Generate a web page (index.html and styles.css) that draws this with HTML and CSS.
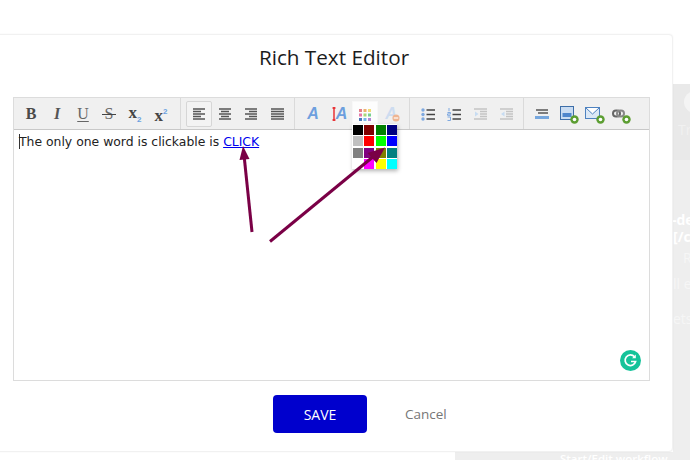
FILE: index.html
```html
<!DOCTYPE html>
<html lang="en">
<head>
<meta charset="utf-8">
<title>Rich Text Editor</title>
<link rel="stylesheet" href="styles.css">
</head>
<body>
<div class="backdrop">
  <div class="bd-side">
    <div class="bd-head"><span class="bd-dot"></span><span class="bd-line bd-m">Tri</span></div>
    <span class="bd-line bd-a">-de</span>
    <span class="bd-line bd-b">[/co</span>
    <span class="bd-line bd-c">R</span>
    <span class="bd-line bd-d">ll e</span>
    <span class="bd-line bd-e">ets</span>
  </div>
  <div class="bd-bottom"><span class="bd-flow">Start/Edit workflow</span></div>
</div>

<main class="modal">
  <h1 class="title">Rich Text Editor</h1>
  <section class="editor">
    <div class="toolbar">
      <div class="group g-first">
        <span class="btn"><span class="t t-b">B</span></span>
        <span class="btn"><span class="t t-i">I</span></span>
        <span class="btn"><span class="t t-u">U</span></span>
        <span class="btn"><span class="t t-s">S</span></span>
        <span class="btn"><span class="t t-x t-lo">x<sub>2</sub></span></span>
        <span class="btn"><span class="t t-x t-hi">x<sup>2</sup></span></span>
      </div>
      <div class="group">
        <span class="btn active"><svg width="12" height="12" viewBox="0 0 12 12"><path class="l" d="M0 1h12M0 3.500h8M0 6h12M0 8.500h8M0 11h12"/></svg></span>
        <span class="btn"><svg width="12" height="12" viewBox="0 0 12 12"><path class="l" d="M0 1h12M2 3.500h8M0 6h12M2 8.500h8M0 11h12"/></svg></span>
        <span class="btn"><svg width="12" height="12" viewBox="0 0 12 12"><path class="l" d="M0 1h12M4 3.500h8M0 6h12M4 8.500h8M0 11h12"/></svg></span>
        <span class="btn"><svg width="13" height="12" viewBox="0 0 13 12"><path class="l" d="M0 1h13M0 3.500h13M0 6h13M0 8.500h13M0 11h13"/></svg></span>
      </div>
      <div class="group g-wide">
        <span class="btn"><span class="t t-a">A</span></span>
        <span class="btn btn-rel"><svg class="ibar" width="4" height="14" viewBox="0 0 4 14"><path d="M2 0v14M.5 1h3M.5 13h3" stroke="#e8262a" stroke-width="1.400" fill="none"/></svg><span class="t t-a t-shift">A</span></span>
        <span class="btn open">
          <svg width="12" height="12" viewBox="0 0 12 12">
            <rect x="0" y="0" width="3" height="3" fill="#e4808a"/><rect x="4.500" y="0" width="3" height="3" fill="#eeb070"/><rect x="9" y="0" width="3" height="3" fill="#f0dc78"/>
            <rect x="0" y="4.500" width="3" height="3" fill="#e878a8"/><rect x="4.500" y="4.500" width="3" height="3" fill="#a8d878"/><rect x="9" y="4.500" width="3" height="3" fill="#78d090"/>
            <rect x="0" y="9" width="3" height="3" fill="#4a78b8"/><rect x="4.500" y="9" width="3" height="3" fill="#78b8e8"/><rect x="9" y="9" width="3" height="3" fill="#b088d8"/>
          </svg>
          <span class="palette">
            <i class="c c1"></i><i class="c c2"></i><i class="c c3"></i><i class="c c4"></i>
            <i class="c c5"></i><i class="c c6"></i><i class="c c7"></i><i class="c c8"></i>
            <i class="c c9"></i><i class="c c10"></i><i class="c c11"></i><i class="c c12"></i>
            <i class="c c13"></i><i class="c c14"></i><i class="c c15"></i><i class="c c16"></i>
          </span>
        </span>
        <span class="btn btn-rel"><span class="t t-a faded">A</span><svg class="minus" width="8" height="8" viewBox="0 0 9 9"><circle cx="4.500" cy="4.500" r="4" fill="#eeb592"/><path d="M2 4.500h5" stroke="#fff" stroke-width="1.300"/></svg></span>
      </div>
      <div class="group g-wide g-lists">
        <span class="btn"><svg width="14" height="13" viewBox="0 0 14 13"><circle cx="2" cy="2" r="1.700" fill="#7fa9e0"/><circle cx="2" cy="6.500" r="1.700" fill="#7fa9e0"/><circle cx="2" cy="11" r="1.700" fill="#7fa9e0"/><path class="k" d="M5.500 2H14M5.500 6.500H14M5.500 11H14"/></svg></span>
        <span class="btn"><svg width="14" height="13" viewBox="0 0 14 13"><path d="M2 0v3.200M.5 4.500h3v1.400h-3v1.400h3M.5 9h3v3.500h-3" stroke="#7fa9e0" stroke-width="1" fill="none"/><path class="k" d="M5.500 2H14M5.500 6.500H14M5.500 11H14"/></svg></span>
        <span class="btn"><svg width="13" height="12" viewBox="0 0 13 12"><path class="g" d="M0 1h13M6 3.500h7M6 6h7M6 8.500h7M0 11h13"/><path d="M4.500 6L1 3.500v5z" fill="#c7dcf2"/></svg></span>
        <span class="btn"><svg width="13" height="12" viewBox="0 0 13 12"><path class="g" d="M0 1h13M6 3.500h7M6 6h7M6 8.500h7M0 11h13"/><path d="M1 6L4.500 3.500v5z" fill="#c7dcf2"/></svg></span>
      </div>
      <div class="group g-last">
        <span class="btn"><svg width="14" height="10" viewBox="0 0 14 10"><path d="M1 1h12M3 4h10" stroke="#555" stroke-width="1.600"/><rect x="0" y="7" width="14" height="3" fill="#76a7de"/></svg></span>
        <span class="btn btn-rel"><svg class="up" width="14" height="14" viewBox="0 0 14 14"><rect x=".5" y=".5" width="13" height="13" fill="#c9dcf2" stroke="#3d6ea8"/><rect x="2.500" y="7" width="9" height="4" fill="#4e86cc"/></svg><svg class="plus" width="9" height="9" viewBox="0 0 9 9"><circle cx="4.500" cy="4.500" r="4.200" fill="#5c9e32"/><circle cx="4.500" cy="4.500" r="1.800" fill="#fff"/></svg></span>
        <span class="btn btn-rel"><svg class="up" width="15" height="12" viewBox="0 0 15 12"><rect x=".5" y=".5" width="14" height="11" fill="#dbe8f6" stroke="#4e82c0"/><path d="M1 1l6.500 6L14 1" stroke="#4e82c0" fill="#fff"/></svg><svg class="plus" width="9" height="9" viewBox="0 0 9 9"><circle cx="4.500" cy="4.500" r="4.200" fill="#5c9e32"/><circle cx="4.500" cy="4.500" r="1.800" fill="#fff"/></svg></span>
        <span class="btn btn-rel"><svg class="up" width="13" height="9" viewBox="0 0 13 9"><rect x="1" y="1.500" width="7" height="6" rx="3" fill="none" stroke="#666" stroke-width="2"/><rect x="5" y="1.500" width="7" height="6" rx="3" fill="none" stroke="#888" stroke-width="2"/></svg><svg class="plus" width="9" height="9" viewBox="0 0 9 9"><circle cx="4.500" cy="4.500" r="4.200" fill="#5c9e32"/><circle cx="4.500" cy="4.500" r="1.800" fill="#fff"/></svg></span>
      </div>
    </div>
    <div class="content">
      <p class="text"><span class="caret"></span>The only one word is clickable is <a class="link" href="#">CLICK</a></p>
      <svg class="grammarly" width="21" height="21" viewBox="0 0 21 21"><circle cx="10.500" cy="10.500" r="10.500" fill="#15c39a"/><path d="M14.500 6.800A5.300 5.300 0 1 0 15.600 11.500H11" fill="none" stroke="#fff" stroke-width="1.700"/><path d="M15.800 4.600v3.700h-3.700z" fill="#fff"/></svg>
    </div>
  </section>
  <div class="actions">
    <button class="save" type="button">SAVE</button>
    <span class="cancel">Cancel</span>
  </div>
</main>

<svg class="arrows" width="690" height="460" viewBox="0 0 690 460">
  <path d="M252 232L244 155" class="arrow"/>
  <path d="M243 146L239.500 160L249.500 159z" class="head"/>
  <path d="M270 241.500L374 156" class="arrow"/>
  <path d="M385 147.500L367.500 153L376.500 163z" class="head"/>
</svg>
</body>
</html>
```
FILE: styles.css
```css
* { box-sizing: border-box; }
html, body { margin: 0; padding: 0; }
body {
  position: relative;
  width: 690px;
  height: 460px;
  overflow: hidden;
  background: #fff;
  font-family: "Open Sans", sans-serif;
}

/* dimmed page behind the dialog */
.backdrop { position: absolute; inset: 0; }
.bd-side {
  position: absolute;
  left: 673px;
  top: 84px;
  width: 17px;
  height: 376px;
  background: #eeeeee;
  color: #fff;
  font-size: 14px;
  overflow: hidden;
}
.bd-head { position: relative; height: 76px; background: #e9e9e9; }
.bd-dot {
  position: absolute;
  left: 11px;
  top: 7px;
  width: 22px;
  height: 22px;
  border-radius: 50%;
  background: #f4f4f4;
}
.bd-line { position: absolute; white-space: nowrap; line-height: 16px; }
.bd-m { left: 5px; top: 38px; color: #f1f1f1; }
.bd-a { left: -1px; top: 128px; font-weight: 700; }
.bd-b { left: 0; top: 145px; font-weight: 700; }
.bd-c { left: 10px; top: 166px; color: #f6f6f6; }
.bd-d { left: 0; top: 192px; color: #f6f6f6; }
.bd-e { left: 0; top: 227px; color: #f6f6f6; }
.bd-bottom {
  position: absolute;
  left: 455px;
  top: 452px;
  width: 235px;
  height: 8px;
  background: #eeeeee;
  overflow: hidden;
}
.bd-flow {
  position: absolute;
  left: 105px;
  top: 0;
  color: #fff;
  font-size: 11.500px;
  font-weight: 600;
  line-height: 14px;
  white-space: nowrap;
}

/* dialog */
.modal {
  position: absolute;
  left: -5px;
  top: 34px;
  width: 678px;
  height: 418px;
  padding: 0 23px 0 17px;
  background: #fff;
  border: 1px solid #f1f1f1;
  border-radius: 4px;
  box-shadow: 0 0 2px rgba(0,0,0,.05);
}
.title {
  margin: 8px 0 0 -17px;
  width: 676px;
  height: 54px;
  text-align: center;
  font-size: 20.700px;
  font-weight: 400;
  line-height: 28px;
  color: #1c1c1c;
}

.editor {
  width: 637px;
  height: 284px;
  border: 1px solid #dcdcdc;
  display: flex;
  flex-direction: column;
}
.toolbar {
  display: flex;
  height: 32px;
  flex: none;
  background: #f0f0f0;
  border-bottom: 1px solid #c8c8c8;
}
.group {
  display: flex;
  padding: 0 4px 0 5px;
  border-left: 1px solid #dadada;
}
.g-first { padding: 0 6px 0 4px; border-left: 0; }
.g-wide { padding: 0 5px 0 5px; }
.g-lists { padding-right: 4px; }
.btn {
  position: relative;
  width: 26px;
  height: 26px;
  margin-top: 3px;
  display: flex;
  align-items: center;
  justify-content: center;
  border: 1px solid transparent;
}
.active { border-color: #d6d6d6; background: #f3f3f3; border-radius: 2px; }
.open { background: #fdfdfd; height: 28px; border-color: #f8f8f8; }
.btn-rel { overflow: visible; }

.t {
  font-family: "Liberation Serif", serif;
  font-size: 16px;
  line-height: 16px;
  color: #4a4a4a;
}
.t-b { font-weight: 700; }
.t-i { font-style: italic; font-weight: 700; color: #555; }
.t-u { text-decoration: underline; text-underline-offset: 2px; color: #666; }
.t-s { position: relative; color: #666; font-size: 16px; }
.t-s::after {
  content: "";
  position: absolute;
  left: -3px;
  right: -3px;
  top: 8px;
  height: 1px;
  background: #444;
}
.t-x { font-weight: 700; color: #444; font-size: 17px; }
.t-lo { margin-top: -3px; }
.t-hi { margin-top: 4px; }
.t-x sub, .t-x sup {
  font-family: "Liberation Sans", sans-serif;
  font-size: 8px;
  color: #6aa0e0;
  line-height: 0;
}
.t-a {
  font-family: "Liberation Sans", sans-serif;
  font-size: 16px;
  font-weight: 700;
  font-style: italic;
  color: #6d9fde;
}
.t-shift { margin-left: 5px; }
.faded { color: #cddcf0; }
.ibar { position: absolute; left: 5px; top: 5px; }
.minus { position: absolute; left: 13px; top: 12px; }
.plus { position: absolute; left: 14px; top: 13px; }
.up { margin-top: -2px; margin-left: -3px; }

svg .l { stroke: #555; stroke-width: 1.400; fill: none; }
svg .k { stroke: #444; stroke-width: 1.400; fill: none; }
svg .g { stroke: #c4c4c4; stroke-width: 1.500; fill: none; }

.palette {
  position: absolute;
  left: -1px;
  top: 22px;
  z-index: 2;
  width: 45px;
  height: 45px;
  padding: 1px;
  display: grid;
  grid-template-columns: repeat(4, 10px);
  grid-template-rows: repeat(4, 10px);
  gap: 1.300px;
  background: #fff;
  box-shadow: 1px 2px 4px rgba(0,0,0,.3);
}
.c { display: block; }
.c1 { background: #000; }
.c2 { background: #800000; }
.c3 { background: #008000; }
.c4 { background: #000080; }
.c5 { background: #c0c0c0; }
.c6 { background: #f00; }
.c7 { background: #0f0; }
.c8 { background: #00f; }
.c9 { background: #808080; }
.c10 { background: #800080; }
.c11 { background: #808000; }
.c12 { background: #008080; }
.c13 { background: #fff; }
.c14 { background: #f0f; }
.c15 { background: #ff0; }
.c16 { background: #0ff; }

.content { position: relative; flex: 1; padding: 3px 5px; background: #fff; }
.text {
  margin: 0;
  font-family: "DejaVu Sans", sans-serif;
  font-size: 12.400px;
  line-height: 18px;
  color: #222;
  white-space: nowrap;
}
.caret {
  display: inline-block;
  width: 1px;
  height: 15px;
  margin-right: -1px;
  vertical-align: -3px;
  background: #333;
}
.link { color: #0000ee; text-decoration: underline; }
.grammarly { position: absolute; right: 8px; bottom: 9px; }

.actions {
  display: flex;
  align-items: center;
  margin-top: 14px;
  padding-left: 260px;
}
.save {
  width: 94px;
  height: 38px;
  border: 0;
  border-radius: 4px;
  background: #0000cd;
  color: #fff;
  font-family: "Open Sans", sans-serif;
  font-size: 14px;
  font-weight: 500;
}
.cancel { margin-left: 38px; color: #777; font-size: 13.500px; }

.arrows { position: absolute; left: 0; top: 0; z-index: 5; pointer-events: none; }
.arrow { stroke: #7a0046; stroke-width: 3; fill: none; }
.head { fill: #7a0046; }
```
